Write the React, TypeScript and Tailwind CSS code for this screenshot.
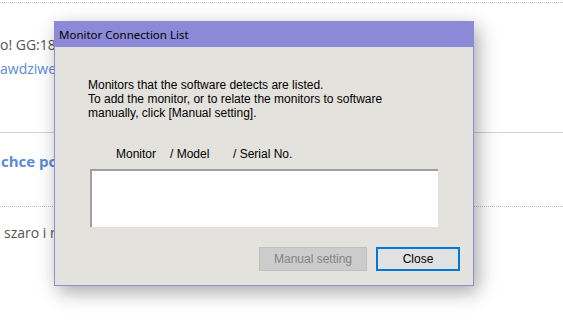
import React from "react";

export default function App() {
  return (
    <div className="relative w-[563px] h-[332px] overflow-hidden bg-white" style={{ fontFamily: '"Open Sans", sans-serif' }}>
      {/* background page */}
      <div className="flex flex-col">
        <div className="mt-[2px] h-0 border-t border-dotted border-[#bdbdbd]" />
        <div className="mt-[33px] text-[14px] leading-[18px] text-[#555555] whitespace-nowrap">o! GG:18934</div>
        <div className="mt-[6px] text-[14px] leading-[18px] text-[#5a8ad6] whitespace-nowrap">awdziwego</div>
        <div className="mt-[54px] h-0 border-t border-[#cfcfcf]" />
        <div className="mt-[18px] pl-[1px] text-[15px] leading-[20px] font-bold text-[#5a8ad6] whitespace-nowrap">chce pomóc</div>
        <div className="mt-[35px] h-0 border-t border-dotted border-[#bdbdbd]" />
        <div className="mt-[17px] pl-[4px] text-[14px] leading-[18px] text-[#555555] whitespace-nowrap">szaro i nie</div>
      </div>

      {/* dialog */}
      <div className="absolute left-[54px] top-[21px] w-[420px] h-[265px] border border-[#8f8bd6] bg-[#e4e2dd] flex flex-col shadow-[4px_6px_18px_rgba(0,0,0,0.35)]">
        <div className="h-[25px] bg-[#8c89d8] flex items-center pl-[4px] text-[11.5px] text-black" style={{ fontFamily: '"Noto Sans", "Open Sans", sans-serif' }}>
          Monitor Connection List
        </div>
        <div className="flex flex-col flex-1 text-[12px] text-black" style={{ fontFamily: '"Liberation Sans", Arial, sans-serif' }}>
          <div className="mt-[31px] pl-[33px] leading-[14px]">
            <div>Monitors that the software detects are listed.</div>
            <div>To add the monitor, or to relate the monitors to software</div>
            <div>manually, click [Manual setting].</div>
          </div>
          <div className="mt-[27px] flex leading-[14px] text-[12px]">
            <span className="ml-[61px] w-[54px]">Monitor</span>
            <span className="w-[63px]">/ Model</span>
            <span>/ Serial No.</span>
          </div>
          <div className="mt-[8px] ml-[35px] w-[348px] h-[58px] bg-white border-t-2 border-l-2 border-[#a0a0a0]" />
          <div className="mt-[20px] flex justify-end gap-[9px] pr-[13px]">
            <div className="w-[108px] h-[24px] bg-[#cccccc] border border-[#bfbfbf] text-[#838383] flex items-center justify-center">
              Manual setting
            </div>
            <div className="w-[84px] h-[24px] bg-[#e1e1e1] border-2 border-[#0078d7] flex items-center justify-center">
              Close
            </div>
          </div>
        </div>
      </div>
    </div>
  );
}
